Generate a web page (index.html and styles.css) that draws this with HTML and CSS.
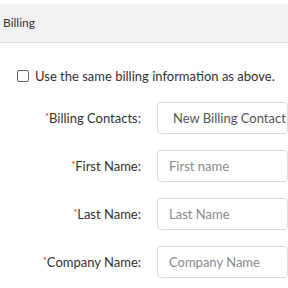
FILE: index.html
```
<!DOCTYPE html>
<html lang="en">

<head>
    <meta charset="UTF-8">
    <title>Billing</title>
    <link rel="stylesheet" href="styles.css">
</head>

<body>
    <div class="section">
        <div class="section-title">Billing</div>
        <label class="same-as">
            <span class="check"></span>
            Use the same billing information as above.
        </label>
        <div class="form">
            <div class="row">
                <label class="label"><i>*</i>Billing Contacts:</label>
                <div class="input value">New Billing Contact</div>
            </div>
            <div class="row">
                <label class="label"><i>*</i>First Name:</label>
                <input class="input" placeholder="First name">
            </div>
            <div class="row">
                <label class="label"><i>*</i>Last Name:</label>
                <input class="input" placeholder="Last Name">
            </div>
            <div class="row">
                <label class="label"><i>*</i>Company Name:</label>
                <input class="input" placeholder="Company Name">
            </div>
        </div>
    </div>
</body>

</html>
```

FILE: styles.css
```
body {
    margin: 0;
    font-family: Lato, "Liberation Sans", sans-serif;
    color: #333;
    background: #fff;
    overflow: hidden;
}

.section {
    padding-top: 4px;
}

.section-title {
    height: 38px;
    line-height: 38px;
    padding-left: 3px;
    font-size: 12px;
    background: #f2f2f2;
    border-bottom: 1px solid #e0e0e0;
}

.same-as {
    display: flex;
    align-items: center;
    gap: 6px;
    margin: 25px 0 0 17px;
    font-size: 13px;
    color: #333;
}

.same-as .check {
    width: 10px;
    height: 10px;
    border: 1px solid #666;
    border-radius: 2px;
}

.form {
    display: flex;
    flex-direction: column;
    gap: 16px;
    margin-top: 18px;
}

.row {
    display: flex;
    align-items: center;
    gap: 16px;
}

.label {
    flex: none;
    width: 141px;
    text-align: right;
    font-size: 13px;
    color: #333;
}

.label i {
    font-style: normal;
    color: #e02020;
    font-size: 9px;
    vertical-align: 3px;
}

.input {
    box-sizing: border-box;
    flex: 1;
    min-width: 0;
    height: 32px;
    padding: 0 11px;
    border: 1px solid #dcdcdc;
    border-radius: 4px;
    font: 13px Lato, "Liberation Sans", sans-serif;
    color: #333;
    outline: none;
}

.input::placeholder {
    color: #8a8a8a;
}

.value {
    display: flex;
    align-items: center;
    padding-left: 15px;
    white-space: nowrap;
    color: #555;
}
```
